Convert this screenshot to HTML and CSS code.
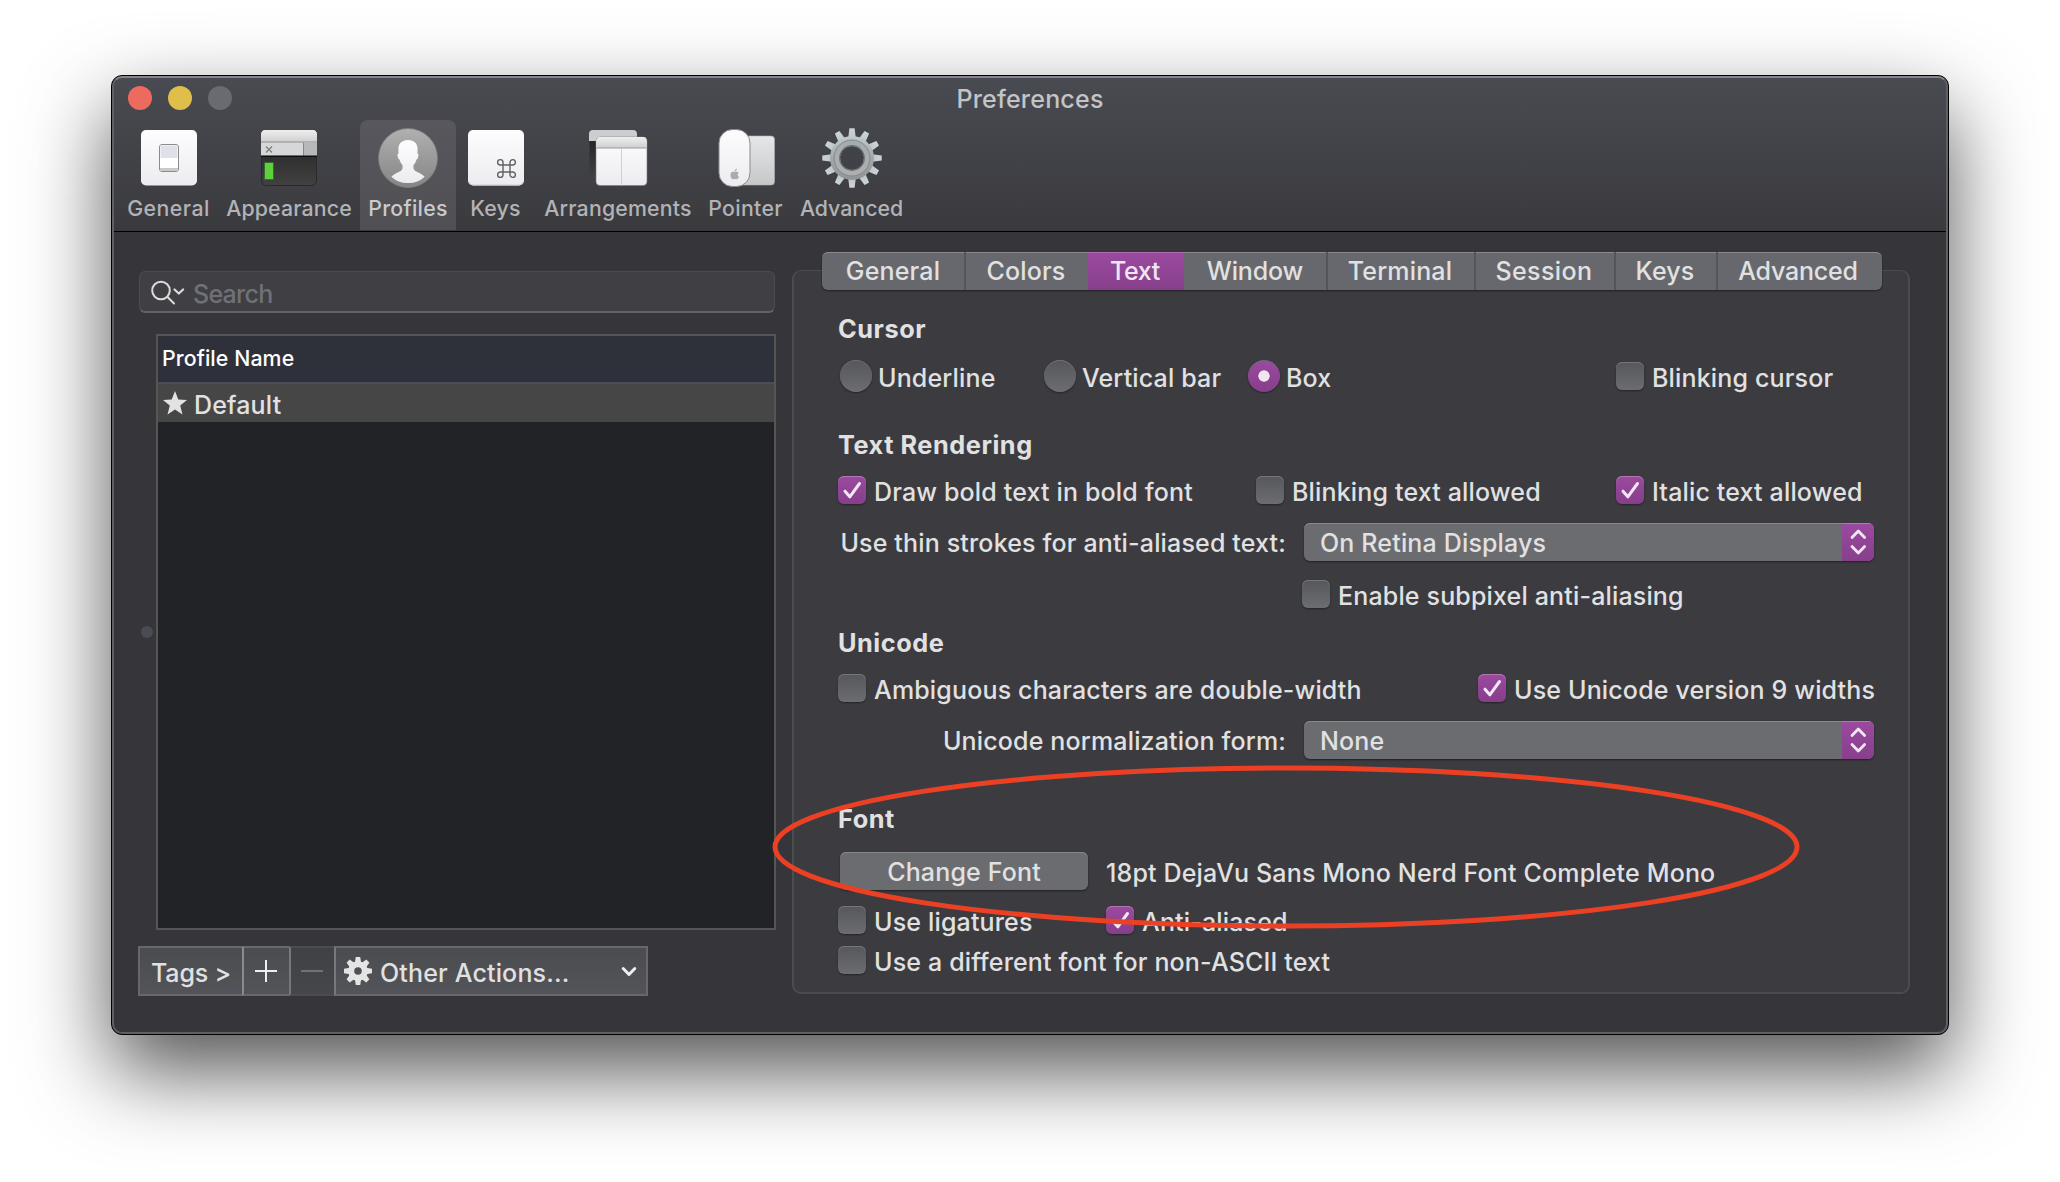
FILE: index.html
```html
<!DOCTYPE html>
<html lang="en">
<head>
<meta charset="utf-8">
<title>Preferences</title>
<link rel="stylesheet" href="styles.css">
</head>
<body>
<svg class="defs" width="0" height="0" aria-hidden="true">
  <defs>
    <linearGradient id="paper" x1="0" y1="0" x2="0" y2="1"><stop offset="0" stop-color="#fdfdfe"/><stop offset="1" stop-color="#ececf0"/></linearGradient>
    <linearGradient id="bar" x1="0" y1="0" x2="0" y2="1"><stop offset="0" stop-color="#eeeeef"/><stop offset="1" stop-color="#cfcfd0"/></linearGradient>
    <linearGradient id="term" x1="0" y1="0" x2="0" y2="1"><stop offset="0" stop-color="#1f1f1f"/><stop offset="1" stop-color="#414141"/></linearGradient>
    <linearGradient id="disc" x1="0" y1="0" x2="0" y2="1"><stop offset="0" stop-color="#b0b0b0"/><stop offset="1" stop-color="#858585"/></linearGradient>
    <linearGradient id="pad" x1="0" y1="0" x2="0" y2="1"><stop offset="0" stop-color="#e4e7e8"/><stop offset="1" stop-color="#c6c8c8"/></linearGradient>
    <linearGradient id="steel" gradientUnits="userSpaceOnUse" x1="0" y1="-30" x2="0" y2="30"><stop offset="0" stop-color="#ccd5d9"/><stop offset=".5" stop-color="#a3a8aa"/><stop offset="1" stop-color="#8c8c8c"/></linearGradient>
    <linearGradient id="steel2" gradientUnits="userSpaceOnUse" x1="0" y1="-20" x2="0" y2="20"><stop offset="0" stop-color="#a3abae"/><stop offset="1" stop-color="#aeb0b1"/></linearGradient>
    <symbol id="check" viewBox="0 0 28 28"><path d="M7 15.2l4.8 5.6L21.500 7.500" fill="none" stroke="#f3e6f4" stroke-width="3" stroke-linecap="round" stroke-linejoin="round"/></symbol>
    <symbol id="updown" viewBox="0 0 32 38"><path d="M10 14.500L16.300 8l6.300 6.500M10 23.500l6.300 6.500 6.300-6.500" fill="none" stroke="#f3e6f4" stroke-width="2.800" stroke-linecap="round" stroke-linejoin="round"/></symbol>
  </defs>
</svg>

<main class="window">
  <header class="header">
    <div class="titlebar">
      <div class="lights"><i class="light red"></i><i class="light yellow"></i><i class="light gray"></i></div>
      <h1 class="title">Preferences</h1>
    </div>
    <nav class="toolbar">
      <div class="tool tool-general">
        <svg class="tool-icon" width="60" height="60" viewBox="0 0 60 60">
          <rect x="2" y="2" width="56" height="55.500" rx="5" fill="url(#paper)"/>
          <rect x="20.500" y="16.500" width="19" height="27" rx="2.500" fill="#fff" stroke="#8b8b8f"/>
          <rect x="21.500" y="17.500" width="17" height="12.500" fill="#dfe1e8"/>
          <rect x="21" y="40" width="18" height="3" fill="#c9c9c9"/>
        </svg>
        <span>General</span>
      </div>
      <div class="tool tool-appearance">
        <svg class="tool-icon" width="60" height="60" viewBox="0 0 60 60">
          <rect x="2.500" y="2.500" width="55" height="55" rx="5" fill="url(#term)" stroke="#29292b"/>
          <path d="M2 28V7q0-5 5-5h46q5 0 5 5v21z" fill="#d6d7d9"/>
          <path d="M2 14V7q0-5 5-5h46q5 0 5 5v7z" fill="url(#bar)"/>
          <rect x="2" y="13.500" width="56" height="1" fill="#8f8f91"/>
          <rect x="44" y="14.500" width="14" height="13" fill="#b7b8ba"/>
          <rect x="44" y="14.500" width="1" height="13" fill="#88888a"/>
          <path d="M7 18.500l6 6m0-6l-6 6" stroke="#7d7e80" stroke-width="1.200"/>
          <rect x="2" y="27.500" width="56" height="1.200" fill="#000"/>
          <rect x="5" y="34" width="10" height="18" rx="1" fill="#3e9a2a" opacity=".5"/>
          <rect x="6" y="35" width="8" height="16" fill="#5dd13c"/>
        </svg>
        <span>Appearance</span>
      </div>
      <div class="tool tool-profiles selected">
        <svg class="tool-icon" width="60" height="60" viewBox="0 0 60 60">
          <circle cx="30" cy="30" r="29.500" fill="url(#disc)" stroke="#7e7e80" stroke-width=".8"/>
          <path d="M30 12c6 0 9.800 3.500 9.600 9.500 0 1.500-.2 3-.2 4 1.500 0 1.200 2 .6 4-.3 1.200-.8 2-1.500 1.900-.6 2.500-1.700 4.300-3 5.500-.3 2.500 0 4.600 1.500 5.800 3 2 6.700 2.600 9.700 6A24 24 0 0 1 30 55a24 24 0 0 1-16.700-6.300c3-3.400 6.700-4 9.700-6 1.500-1.200 1.800-3.300 1.500-5.800-1.300-1.200-2.400-3-3-5.500-.7.1-1.200-.7-1.500-1.900-.6-2-.9-4 .6-4 0-1-.2-2.500-.2-4C20.200 15.500 24 12 30 12z" fill="url(#paper)"/>
        </svg>
        <span>Profiles</span>
      </div>
      <div class="tool tool-keys">
        <svg class="tool-icon" width="60" height="60" viewBox="0 0 60 60">
          <rect x="2" y="2" width="56" height="55.500" rx="5" fill="url(#paper)"/>
          <path d="M3 54q1 3 4 3h46q3 0 4-3" fill="none" stroke="#cfcfd3"/>
          <path d="M37 37h7v7h-7zM37 37v-2.700a2.700 2.700 0 1 0-2.700 2.700zM44 37v-2.700a2.700 2.700 0 1 1 2.700 2.700zM37 44v2.700a2.700 2.700 0 1 1-2.700-2.700zM44 44v2.700a2.700 2.700 0 1 0 2.700-2.700z" fill="none" stroke="#626266" stroke-width="1.400"/>
        </svg>
        <span>Keys</span>
      </div>
      <div class="tool tool-arrangements">
        <svg class="tool-icon" width="60" height="60" viewBox="0 0 60 60">
          <rect x="1.500" y="3" width="40" height="47" rx="4" fill="url(#term)"/>
          <path d="M1 13V6q0-4 4-4h40q4 0 4 4v7z" fill="#cccdce"/>
          <rect x="8" y="9" width="51" height="48.500" rx="4" fill="url(#paper)" stroke="#77787b" stroke-width=".6"/>
          <path d="M8.500 20v-7q0-4 4-4H55q3.500 0 3.500 4v7z" fill="url(#bar)"/>
          <rect x="8.500" y="19.500" width="50" height="1" fill="#98999b"/>
          <rect x="33" y="20.500" width="1" height="37" fill="#cfcfd3"/>
        </svg>
        <span>Arrangements</span>
      </div>
      <div class="tool tool-pointer">
        <svg class="tool-icon" width="60" height="60" viewBox="0 0 60 60">
          <rect x="21" y="8" width="37.500" height="49" rx="3.500" fill="url(#pad)" stroke="#b0b2b2" stroke-width=".6"/>
          <rect x="3" y="1.500" width="31" height="57" rx="13.500" fill="url(#paper)" stroke="#8b8b8e" stroke-width="1"/>
          <path d="M18.800 44.200c1.200-.7 3.100-.6 3.900.7-1.600 1-1.300 3.200.3 3.900-.5 1.300-1.400 2.500-2.300 2.500-.7 0-1.100-.4-2-.4s-1.300.4-1.900.4c-1.800-.3-3.500-5.200-1.200-7 1-.8 2.200-.4 3.200-.1zM18.600 43.500c0-1.500.9-2.500 2.200-2.800.1 1.500-.9 2.700-2.200 2.800z" fill="#a9aaac"/>
        </svg>
        <span>Pointer</span>
      </div>
      <div class="tool tool-advanced">
        <svg class="tool-icon" width="60" height="60" viewBox="-30 -30 60 60">
          <g fill="url(#steel)">
            <path id="bigtooth" d="M-3.800-20L-2.600-29.700h5.200L3.800-20z"/>
            <use href="#bigtooth" transform="rotate(30)"/><use href="#bigtooth" transform="rotate(60)"/><use href="#bigtooth" transform="rotate(90)"/><use href="#bigtooth" transform="rotate(120)"/><use href="#bigtooth" transform="rotate(150)"/><use href="#bigtooth" transform="rotate(180)"/><use href="#bigtooth" transform="rotate(210)"/><use href="#bigtooth" transform="rotate(240)"/><use href="#bigtooth" transform="rotate(270)"/><use href="#bigtooth" transform="rotate(300)"/><use href="#bigtooth" transform="rotate(330)"/>
          </g>
          <circle r="17" fill="none" stroke="url(#steel)" stroke-width="10"/>
          <circle r="15" fill="none" stroke="url(#steel2)" stroke-width="6"/>
          <circle r="18" fill="none" stroke="#7f8486" stroke-width=".9"/>
          <circle r="12.300" fill="none" stroke="#6b7073" stroke-width="1.200"/>
        </svg>
        <span>Advanced</span>
      </div>
    </nav>
  </header>

  <div class="body">
    <aside class="sidebar">
      <div class="search">
        <svg width="36" height="30" viewBox="0 0 36 30" fill="none" stroke="#dcdcdd" stroke-width="2" stroke-linecap="round" stroke-linejoin="round"><circle cx="10" cy="12.500" r="8.800"/><path d="M16.500 19l6.500 6.500"/><path d="M23.500 11.500l4.300 4 4.300-4" stroke-width="2.200"/></svg>
        <span>Search</span>
      </div>
      <div class="list-area">
        <i class="handle"></i>
        <div class="list">
          <div class="list-head">Profile Name</div>
          <div class="list-row">
            <svg width="24" height="24" viewBox="0 0 24 24"><path d="M12 0l3.300 8.400 8.700.5-6.800 5.500 2.300 9L12 18.500 4.500 23.400l2.300-9L0 8.900l8.700-.5z" fill="#e2e2e2"/></svg>
            <span>Default</span>
          </div>
        </div>
      </div>
      <div class="actions">
        <div class="action tags">Tags &gt;</div>
        <div class="action plus"><svg width="24" height="24" viewBox="0 0 24 24"><path d="M12 1v22M1 12h22" stroke="#eee" stroke-width="2"/></svg></div>
        <div class="action minus"><svg width="24" height="24" viewBox="0 0 24 24"><path d="M1 12h22" stroke="#717276" stroke-width="2"/></svg></div>
        <div class="action other">
          <svg width="28" height="28" viewBox="-14 -14 28 28">
            <g fill="#e4e4e5">
              <path id="tooth" d="M-3.200-8L-2.200-14h4.400L3.200-8z"/>
              <use href="#tooth" transform="rotate(45)"/><use href="#tooth" transform="rotate(90)"/><use href="#tooth" transform="rotate(135)"/><use href="#tooth" transform="rotate(180)"/><use href="#tooth" transform="rotate(225)"/><use href="#tooth" transform="rotate(270)"/><use href="#tooth" transform="rotate(315)"/>
            </g>
            <circle r="6.800" fill="none" stroke="#e4e4e5" stroke-width="6"/>
          </svg>
          <span>Other Actions...</span>
          <svg class="chev" width="16" height="12" viewBox="0 0 16 12"><path d="M2.200 2.500L8 8.500l5.800-6" fill="none" stroke="#eee" stroke-width="3" stroke-linecap="round" stroke-linejoin="round"/></svg>
        </div>
      </div>
    </aside>

    <section class="panel">
      <div class="tabs">
        <div class="tab t1">General</div><div class="tab t2">Colors</div><div class="tab t3 active">Text</div><div class="tab t4">Window</div><div class="tab t5">Terminal</div><div class="tab t6">Session</div><div class="tab t7">Keys</div><div class="tab t8">Advanced</div>
      </div>

      <h2 class="heading first">Cursor</h2>
      <div class="row row-radio">
        <label class="option"><i class="radio"></i><span>Underline</span></label>
        <label class="option"><i class="radio"></i><span>Vertical bar</span></label>
        <label class="option"><i class="radio on"></i><span>Box</span></label>
        <label class="option"><i class="box"></i><span>Blinking cursor</span></label>
      </div>

      <h2 class="heading rendering">Text Rendering</h2>
      <div class="row row-three">
        <label class="option"><i class="box on"><svg width="28" height="28"><use href="#check"/></svg></i><span>Draw bold text in bold font</span></label>
        <label class="option"><i class="box"></i><span>Blinking text allowed</span></label>
        <label class="option"><i class="box on"><svg width="28" height="28"><use href="#check"/></svg></i><span>Italic text allowed</span></label>
      </div>
      <div class="field">
        <span class="field-label">Use thin strokes for anti-aliased text:</span>
        <div class="popup"><span>On Retina Displays</span><i class="stepper"><svg width="32" height="38"><use href="#updown"/></svg></i></div>
      </div>
      <div class="row row-indent">
        <label class="option"><i class="box"></i><span>Enable subpixel anti-aliasing</span></label>
      </div>

      <h2 class="heading unicode">Unicode</h2>
      <div class="row row-two">
        <label class="option"><i class="box"></i><span>Ambiguous characters are double-width</span></label>
        <label class="option"><i class="box on"><svg width="28" height="28"><use href="#check"/></svg></i><span>Use Unicode version 9 widths</span></label>
      </div>
      <div class="field">
        <span class="field-label">Unicode normalization form:</span>
        <div class="popup"><span>None</span><i class="stepper"><svg width="32" height="38"><use href="#updown"/></svg></i></div>
      </div>

      <h2 class="heading font">Font</h2>
      <div class="font-row">
        <div class="button">Change Font</div>
        <span class="font-name">18pt DejaVu Sans Mono Nerd Font Complete Mono</span>
      </div>
      <div class="row row-font">
        <label class="option"><i class="box"></i><span>Use ligatures</span></label>
        <label class="option"><i class="box on"><svg width="28" height="28"><use href="#check"/></svg></i><span>Anti-aliased</span></label>
      </div>
      <div class="row row-last">
        <label class="option"><i class="box"></i><span>Use a different font for non-ASCII text</span></label>
      </div>
    </section>
  </div>
</main>

<svg class="annotation" width="1032" height="168" viewBox="0 0 1032 168"><ellipse cx="516" cy="84" rx="511" ry="79" fill="none" stroke="#ec4024" stroke-width="5"/></svg>
</body>
</html>
```
FILE: styles.css
```css
* { box-sizing: border-box; }

body {
  margin: 0;
  width: 2060px;
  height: 1182px;
  padding: 75px 0 0 111px;
  position: relative;
  overflow: hidden;
  background: #fff;
  color: #e1e1e2;
  font-family: Inter, "Liberation Sans", sans-serif;
  font-size: 25px;
  font-weight: 450;
  letter-spacing: 0.16px;
  line-height: 30px;
  white-space: nowrap;
}

svg { display: block; flex: none; }
i { display: block; flex: none; }
.defs { position: absolute; }

.window {
  width: 1838px;
  height: 960px;
  border: 1px solid #000;
  border-radius: 11px;
  overflow: hidden;
  background: #35353a;
  box-shadow: 0 36px 84px rgba(0, 0, 0, 0.68);
  position: relative;
}
/* light rim drawn just inside the window outline */
.window::after {
  content: "";
  position: absolute;
  inset: 0;
  border: 2px solid #5f6065;
  border-top-color: #85868a;
  border-radius: 10px;
  pointer-events: none;
}

/* header */
.header {
  height: 156px;
  border-bottom: 1px solid #000;
  background: linear-gradient(#494b52, #3a3a3e);
}
.titlebar {
  height: 44px;
  display: grid;
  grid-template-columns: 200px 1fr 200px;
  align-items: center;
}
.lights { display: flex; gap: 16px; padding-left: 16px; }
.light { width: 24px; height: 24px; border-radius: 50%; }
.red { background: #ed6a5e; }
.yellow { background: #dfbf4a; }
.gray { background: #6a6b70; }
.title { margin: 2px 0 0; font-size: 25px; font-weight: 450; text-align: center; color: #c3c4c6; letter-spacing: 0.2px; }

.toolbar { display: flex; padding-left: 7px; }
.tool {
  height: 110px;
  padding-top: 8px;
  display: flex;
  flex-direction: column;
  align-items: center;
  gap: 7px;
  font-size: 21.3px;
  line-height: 26px;
  letter-spacing: 0.2px;
  color: #b2b3b6;
}
.tool.selected { background: linear-gradient(#57575d, #4f4f54); border-radius: 8px 8px 0 0; color: #cacacd; }
.tool-general { width: 99px; letter-spacing: 0.45px; }
.tool-appearance { width: 142px; letter-spacing: 0.15px; }
.tool-profiles { width: 96px; letter-spacing: 0.3px; }
.tool-keys { width: 80px; padding-right: 1px; }
.tool-arrangements { width: 164px; }
.tool-pointer { width: 91px; letter-spacing: 0.3px; }
.tool-advanced { width: 121px; letter-spacing: 0; }

/* body */
.body { display: flex; gap: 16px; padding: 38px 0 0 26px; align-items: flex-start; }
.sidebar { width: 638px; }

.search {
  height: 42px;
  margin: 1px 1px 0;
  padding: 3px 0 0 11px;
  display: flex;
  align-items: center;
  gap: 6px;
  background: #3f3f44;
  border: 1px solid #4b4c50;
  border-bottom: 2px solid #626368;
  border-radius: 6px;
  color: #707176;
  letter-spacing: -0.75px;
}
.search span { padding-top: 1px; }

.list-area { display: flex; align-items: center; margin-top: 21px; }
.handle { width: 12px; height: 12px; margin: 0 3px 0 3px; border-radius: 50%; background: #4b4c51; }
.list { width: 620px; height: 596px; border: 2px solid #545555; background: #222327; }
.list-head {
  height: 48px;
  padding-left: 4px;
  border-bottom: 2px solid #4a4e59;
  background: #2f313a;
  color: #fff;
  font-size: 21.3px;
  font-weight: 550;
  letter-spacing: 0.1px;
  line-height: 44px;
}
.list-row { height: 38px; padding-left: 5px; display: flex; align-items: center; gap: 7px; background: #464646; }
.list-row span { padding-top: 3px; }

.actions { display: flex; margin-top: 16px; }
.action {
  height: 50px;
  display: flex;
  align-items: center;
  border: 2px solid #67686b;
  border-right-width: 0;
  background: linear-gradient(#4b4c50, #535459);
}
.tags { width: 104px; padding: 3px 0 0 11px; letter-spacing: -0.15px; }
.plus { width: 47px; padding-left: 10px; border-left-color: #8a8b8d; }
.minus { width: 45px; padding-left: 9px; border-color: #4b4c50; border-left-color: #77787b; background: linear-gradient(#404145, #46474b); }
.other { width: 314px; padding-left: 8px; border-right-width: 2px; border-left-color: #77787b; }
.other span { margin-left: 8px; padding-top: 3px; }
.chev { margin: 1px 9px 0 auto; }

/* settings panel */
.panel {
  width: 1118px;
  height: 724px;
  border: 2px solid #4b4c50;
  border-width: 1px 2px 2px 2px;
  border-radius: 9px;
  background: #3b3b40;
}
.tabs {
  display: flex;
  width: 1060px;
  height: 38px;
  margin: -19px 0 0 28px;
  border-radius: 6px;
  overflow: hidden;
  line-height: 38px;
  text-align: center;
  background: #67686d;
  box-shadow: inset 0 2px 0 -1px #8a8b8f, 0 1px 2px rgba(0, 0, 0, 0.45);
}
.tab { border-left: 2px solid #55565b; padding-right: 2px; }
.t1 { width: 142px; border: 0; padding: 0; }
.t2 { width: 124px; }
.t3 { width: 96px; border: 0; letter-spacing: -0.4px; }
.t4 { width: 142px; border: 0; padding: 0; letter-spacing: -0.15px; }
.t5 { width: 148px; }
.t6 { width: 140px; letter-spacing: 0.4px; }
.t7 { width: 102px; }
.t8 { width: 166px; padding-right: 4px; letter-spacing: -0.2px; }
.tab.active { background: linear-gradient(#9b4a9f, #873f8b); color: #f1e5f2; box-shadow: inset 0 1px 0 #ad6bb0; }

.heading { margin: 0 0 0 44px; height: 30px; font-size: 25.3px; font-weight: 700; letter-spacing: 0.55px; line-height: 30px; }
.first { margin-top: 24px; }
.rendering { margin-top: 38px; }
.unicode { margin-top: 20px; }
.font { margin-top: 45px; }

.row { display: grid; height: 28px; margin: 16px 0 0 44px; align-items: center; }
.row-radio { height: 32px; margin-left: 46px; grid-template-columns: 204px 204px 368px auto; }
.row-three { grid-template-columns: 418px 360px auto; }
.row-two { grid-template-columns: 640px auto; }
.row-indent { margin: 19px 0 0 508px; }
.row-font { grid-template-columns: 268px auto; }
.row-last { margin-top: 12px; }

.option { display: flex; align-items: center; gap: 8px; height: 28px; }
.option span { padding-top: 4px; }
.box {
  width: 28px;
  height: 28px;
  border-radius: 6px;
  background: linear-gradient(#56575b, #6c6d71);
  box-shadow: inset 0 1px 0 #76777b, 0 1px 2px rgba(0, 0, 0, 0.4);
}
.radio {
  width: 32px;
  height: 32px;
  margin-right: -2px;
  border-radius: 50%;
  background: linear-gradient(#56575b, #6c6d71);
  box-shadow: inset 0 1px 0 #6e6f73, 0 1px 2px rgba(0, 0, 0, 0.4);
}
.box.on { background: linear-gradient(#9b4a9f, #863e8a); box-shadow: inset 0 1px 0 #b377b6, 0 1px 2px rgba(0, 0, 0, 0.4); }
.radio.on { background: radial-gradient(circle, #f1e5f2 0 5.300px, transparent 6px), linear-gradient(#9b4a9f, #863e8a); }

.field { display: flex; height: 38px; margin: 19px 0 0 44px; gap: 18px; }
.field-label { width: 448px; text-align: right; line-height: 40px; }
.popup {
  width: 570px;
  padding-left: 16px;
  display: flex;
  justify-content: space-between;
  line-height: 40px;
  border-radius: 6px;
  overflow: hidden;
  background: #6b6c70;
  box-shadow: inset 0 1px 0 #88898c, 0 1px 2px rgba(0, 0, 0, 0.45);
}
.stepper { width: 32px; background: linear-gradient(#9b4a9f, #873f8b); box-shadow: inset 0 1px 0 #b377b6; }

.font-row { display: flex; height: 38px; margin: 18px 0 0 46px; gap: 18px; line-height: 40px; }
.button {
  width: 248px;
  text-align: center;
  border-radius: 6px;
  background: #6b6c70;
  box-shadow: inset 0 1px 0 #88898c, 0 1px 2px rgba(0, 0, 0, 0.45);
}
.font-name { line-height: 42px; }

/* hand-drawn highlight over the font section */
.annotation { position: absolute; left: 770px; top: 763px; }
```
